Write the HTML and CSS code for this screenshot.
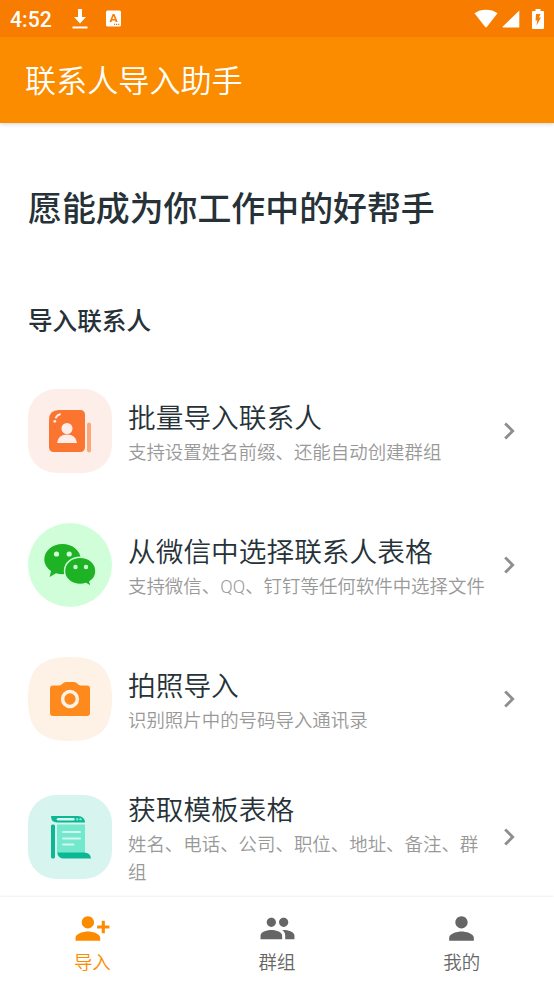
FILE: index.html
```html
<!DOCTYPE html>
<html lang="zh-CN">
<head>
<meta charset="utf-8">
<title>联系人导入助手</title>
<link rel="stylesheet" href="styles.css">
</head>
<body>
<div class="status">
  <span class="time">4:52</span>
  <svg class="download" width="16" height="22" viewBox="0 0 16 22"><path d="M6 1h4v8h4l-6 6.500L2 9h4zM.5 18.500h15v2H.5z"/></svg>
  <svg class="ime" width="15" height="17" viewBox="0 0 15 17"><rect y=".5" width="15" height="16" rx="1.500"/><path class="cut" d="M3.500 12L6.700 4h1.800l3.200 8H9.700l-.5-1.500H6L5.500 12zM6.500 9h2.200L7.600 6z"/><path class="cut" d="M8 13.800h1.200V15H8zM10 13.800h1.200V15H10zM12 13.800h1.200V15H12z"/></svg>
  <div class="system">
    <svg width="24" height="20" viewBox="0 0 24 20"><path d="M.5 4.200Q5.500.8 12 .8t11.500 3.400L12.800 18q-.8.900-1.600 0z"/></svg>
    <svg width="18" height="18" viewBox="0 0 18 18"><path d="M17.300.5V17.500H1.300Q0 17.500.8 16.500z"/></svg>
    <svg class="battery" width="12" height="20" viewBox="0 0 12 20"><path d="M3.500 0h5v2H11q1 0 1 1v16q0 1-1 1H1q-1 0-1-1V3q0-1 1-1h2.500z"/><path class="cut" d="M4 5h4.500L7 8.500h2L4.500 16.500l.7-5H3.500z"/></svg>
  </div>
</div>
<header class="appbar">联系人导入助手</header>
<main>
  <h1>愿能成为你工作中的好帮手</h1>
  <h2>导入联系人</h2>
  <div class="row">
    <svg class="tile" viewBox="0 0 84 84">
      <rect width="84" height="84" rx="28" fill="#feeeea"/>
      <path d="M31 21h21q5 0 5 5v32q0 5-5 5H26q-5 0-5-5V31q0-10 10-10z" fill="#fb7430"/>
      <rect x="59" y="33.500" width="4" height="30" rx="2" fill="#fba77a"/>
      <circle cx="39" cy="39.500" r="5.500" fill="#feeeea"/><path d="M29 54q1-8.500 10-8.500T49 54z" fill="#feeeea"/>
      <path d="M28 28.500q1.300-2.500 4-3.200" fill="none" stroke="#feeeea" stroke-width="2" stroke-linecap="round"/><circle cx="26.800" cy="32.300" r="1.400" fill="#feeeea"/>
    </svg>
    <div class="text"><div class="name">批量导入联系人</div><div class="desc">支持设置姓名前缀、还能自动创建群组</div></div>
    <svg class="chevron" viewBox="0 0 24 24"><path d="M10 6L8.590 7.410 13.170 12l-4.580 4.590L10 18l6-6z"/></svg>
  </div>
  <div class="row">
    <svg class="tile" viewBox="0 0 84 84">
      <circle cx="42" cy="42" r="42" fill="#d0fed8"/>
      <g fill="#1db324"><path d="M34.500 21C24.500 21 16.300 27.800 16.300 36.200c0 4.800 2.700 9 6.800 11.800L21.600 54l6.400-3.800c2 .6 4.200 1 6.500 1 10 0 18.200-6.700 18.200-15.100S44.500 21 34.500 21z"/>
      <path d="M52.200 34.200c-8.700 0-15.700 5.900-15.700 13.700 0 7.700 7 13.600 15.700 13.600 2 0 4-.4 5.800-1l5.200 3-1.300-4.800c3.700-2.500 6-6.400 6-10.800 0-7.800-7-13.700-15.700-13.700z" stroke="#d0fed8" stroke-width="1.400"/></g>
      <g fill="#d0fed8"><circle cx="28.500" cy="31" r="2.600"/><circle cx="41.200" cy="31" r="2.600"/><circle cx="47.500" cy="44" r="2.200"/><circle cx="58" cy="44" r="2.200"/></g>
    </svg>
    <div class="text"><div class="name">从微信中选择联系人表格</div><div class="desc">支持微信、QQ、钉钉等任何软件中选择文件</div></div>
    <svg class="chevron" viewBox="0 0 24 24"><path d="M10 6L8.590 7.410 13.170 12l-4.580 4.590L10 18l6-6z"/></svg>
  </div>
  <div class="row">
    <svg class="tile" viewBox="0 0 84 84">
      <path d="M42 0C72 0 84 12 84 42S72 84 42 84 0 72 0 42 12 0 42 0z" fill="#fef1e6"/>
      <path d="M25 28.500h6q2 0 3.500-1.700T38 25h8q2 0 3.500 1.800T53 28.500h6q3 0 3 3V56q0 3-3 3H25q-3 0-3-3V31.500q0-3 3-3z" fill="#fe8a1d"/>
      <circle cx="42" cy="42" r="7.400" fill="none" stroke="#fef1e6" stroke-width="3.500"/>
    </svg>
    <div class="text"><div class="name">拍照导入</div><div class="desc">识别照片中的号码导入通讯录</div></div>
    <svg class="chevron" viewBox="0 0 24 24"><path d="M10 6L8.590 7.410 13.170 12l-4.580 4.590L10 18l6-6z"/></svg>
  </div>
  <div class="row">
    <svg class="tile" viewBox="0 0 84 84">
      <rect width="84" height="84" rx="28" fill="#d8f4ee"/>
      <path d="M29 29.500h28v33H34q-5 0-5-5z" fill="#72e8cd"/>
      <path d="M23 21h27q6.500 0 7 6.500H29Q23 27.500 23 21z" fill="#0cb893"/>
      <path d="M30 24.300h15.500" stroke="#d8f4ee" stroke-width="2.400" stroke-linecap="round"/><circle cx="49.200" cy="24.300" r="1.200" fill="#72e8cd"/><circle cx="52.500" cy="24.300" r="1.200" fill="#72e8cd"/>
      <rect x="23" y="29.500" width="4" height="34" rx="1.500" fill="#0cb893"/>
      <path d="M29.500 57.500H56q6.500 0 7 6H36q-6 0-6.500-6z" fill="#0cb893"/>
      <path d="M35 37h17M35 43.500h17M35 49.500h10.500" stroke="#d8f4ee" stroke-width="2" stroke-linecap="round"/>
    </svg>
    <div class="text"><div class="name">获取模板表格</div><div class="desc">姓名、电话、公司、职位、地址、备注、群组</div></div>
    <svg class="chevron" viewBox="0 0 24 24"><path d="M10 6L8.590 7.410 13.170 12l-4.580 4.590L10 18l6-6z"/></svg>
  </div>
</main>
<nav>
  <div class="tab active"><svg viewBox="0 0 24 24"><path d="M13 8c0-2.210-1.790-4-4-4S5 5.790 5 8s1.790 4 4 4 4-1.790 4-4zm2 2v2h3v3h2v-3h3v-2h-3V7h-2v3h-3zM1 18v2h16v-2c0-2.660-5.330-4-8-4s-8 1.340-8 4z"/></svg><span>导入</span></div>
  <div class="tab"><svg viewBox="0 0 24 24"><path d="M16 11c1.660 0 2.990-1.340 2.990-3S17.660 5 16 5s-3 1.340-3 3 1.340 3 3 3zm-8 0c1.660 0 2.990-1.340 2.990-3S9.660 5 8 5 5 6.340 5 8s1.340 3 3 3zm0 2c-2.330 0-7 1.170-7 3.500V19h14v-2.500c0-2.330-4.670-3.500-7-3.500zm8 0c-.29 0-.62.020-.97.050 1.160.840 1.970 1.970 1.970 3.450V19h6v-2.500c0-2.330-4.670-3.500-7-3.500z"/></svg><span>群组</span></div>
  <div class="tab"><svg viewBox="0 0 24 24"><path d="M12 12c2.210 0 4-1.790 4-4s-1.790-4-4-4-4 1.790-4 4 1.790 4 4 4zm0 2c-2.670 0-8 1.340-8 4v2h16v-2c0-2.660-5.330-4-8-4z"/></svg><span>我的</span></div>
</nav>
</body>
</html>
```
FILE: styles.css
```css
* { box-sizing: border-box; }
body {
  margin: 0;
  height: 984px;
  display: flex;
  flex-direction: column;
  overflow: hidden;
  background: #fff;
  color: #263238;
  font-family: Roboto, "Noto Sans CJK SC", sans-serif;
}
svg { display: block; flex: none; }
.status {
  position: relative;
  height: 37px;
  flex: none;
  display: flex;
  align-items: center;
  padding: 0 10px;
  background: #f77c00;
  color: #fff;
}
.status svg { fill: #fff; }
.status .cut { fill: #f77c00; }
.time { width: 62px; font-size: 21.200px; font-weight: 500; line-height: 37px; padding-top: 2px; }
.download { margin-right: 18px; }
.system { margin-left: auto; display: flex; align-items: center; gap: 4px; }
.battery { margin-left: 8px; }
.appbar {
  height: 86px;
  flex: none;
  padding: 3px 0 0 25px;
  background: #fb8c00;
  color: #fff;
  font-size: 31.100px;
  font-weight: 350;
  line-height: 84px;
  box-shadow: 0 1px 4px rgba(0, 0, 0, .18);
}
main { flex: 1; min-height: 0; padding: 0 28px; }
h1 { margin: 62px 0 0; font-size: 33.900px; font-weight: 500; line-height: 50px; }
h2 { margin: 69px 0 25px; font-size: 24.600px; font-weight: 500; line-height: 35px; }
.row { display: flex; align-items: center; padding: 25px 0; }
.tile { width: 84px; height: 84px; }
.text { flex: 1; min-width: 0; margin: 0 4px 0 16px; }
.name { padding: 1px 0 3px; font-size: 27.700px; font-weight: 350; line-height: 37px; }
.desc { margin-bottom: -4px; color: #999; font-size: 18.450px; font-weight: 350; line-height: 27.500px; }
.chevron { width: 34px; height: 34px; margin-right: 0; fill: #8e8e8e; }
nav {
  height: 87px;
  flex: none;
  display: flex;
  padding-top: 13px;
  background: #fff;
  box-shadow: 0 0 3px rgba(0, 0, 0, .12);
  position: relative;
}
.tab { flex: 1; display: flex; flex-direction: column; align-items: center; color: #666; font-size: 18.450px; font-weight: 350; line-height: 32px; }
.tab svg { width: 37px; height: 37px; fill: currentColor; }
.tab.active { color: #fb8c00; }
```
